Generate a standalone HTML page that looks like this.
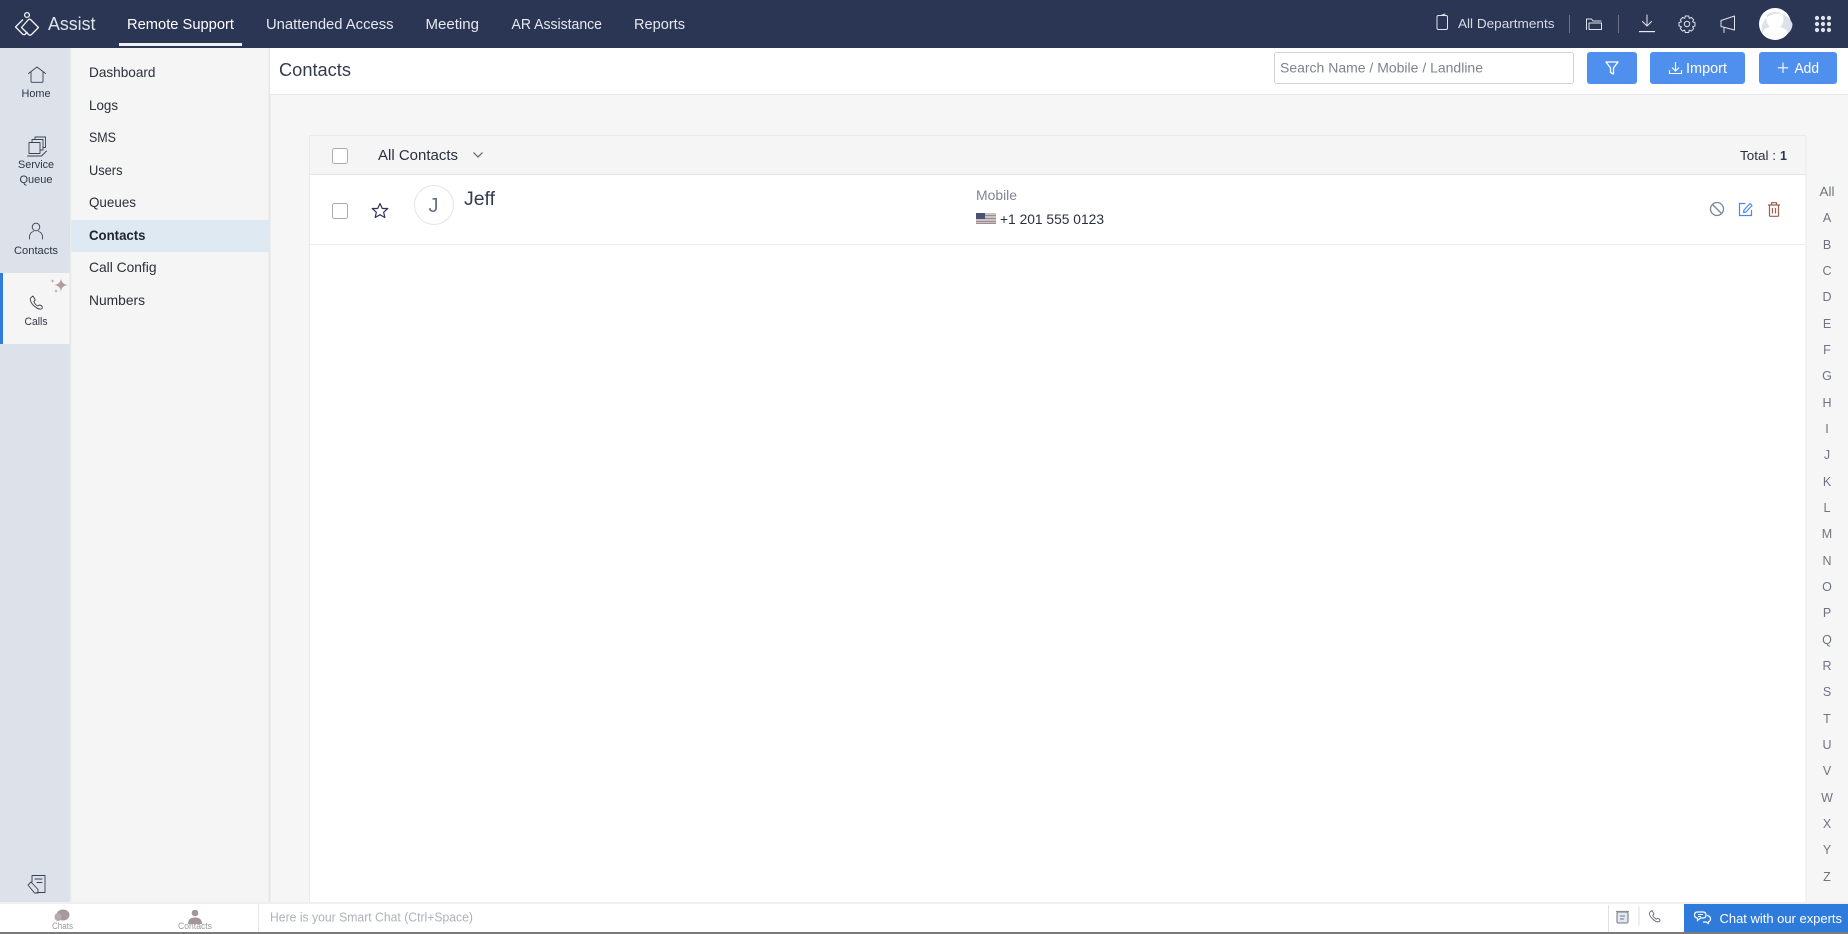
<!DOCTYPE html>
<html lang="en"><head><meta charset="utf-8"><title>Contacts</title>
<style>
html,body{margin:0;padding:0;width:1848px;height:934px;overflow:hidden;background:#fff}
svg{display:block}
text{font-family:"Liberation Sans",sans-serif}
.n{fill:#e6e9f0;font-size:14.5px}
.r{fill:#2f3645;font-size:11px;text-anchor:middle}
.m{fill:#2a2f3a;font-size:14px}
.a{fill:#6f7480;font-size:12.5px;text-anchor:middle}
.w{fill:none;stroke:#e0e4ec;stroke-width:1;stroke-linecap:round;stroke-linejoin:round}
.d{fill:none;stroke:#3a4150;stroke-width:.9;stroke-linecap:round;stroke-linejoin:round}
</style></head><body>
<svg xmlns="http://www.w3.org/2000/svg" width="1848" height="934" viewBox="0 0 1848 934">
<rect width="1848" height="934" fill="#f6f6f6"/>
<!-- header -->
<rect width="1848" height="48" fill="#2b3654"/>
<g fill="none" stroke="#f2f4f8" stroke-width="1.3" stroke-linejoin="round">
<circle cx="27" cy="15" r="2.400"/>
<path d="M23 19.500 L15.500 27 L22.500 34 Q24 35.300 25.500 34 L27.500 32"/>
<path d="M30.500 19.500 L38.500 27.500 L31.500 34.500 Q30 35.800 28.500 34.500 L21.500 27.500 L28 20 Q29.300 18.600 30.500 19.500Z"/>
</g>
<text x="48" y="30" font-size="18" fill="#dfe3ea" textLength="47.500" lengthAdjust="spacingAndGlyphs">Assist</text>
<text class="n" x="127" y="29" textLength="107" lengthAdjust="spacingAndGlyphs" style="fill:#fff">Remote Support</text>
<text class="n" x="266" y="29" textLength="127.500" lengthAdjust="spacingAndGlyphs">Unattended Access</text>
<text class="n" x="425.500" y="29" textLength="53.500" lengthAdjust="spacingAndGlyphs">Meeting</text>
<text class="n" x="511.500" y="29" textLength="90.500" lengthAdjust="spacingAndGlyphs">AR Assistance</text>
<text class="n" x="634" y="29" textLength="51" lengthAdjust="spacingAndGlyphs">Reports</text>
<rect x="119" y="43" width="123" height="3" fill="#eef0f4"/>
<rect x="1437" y="15.500" width="10.500" height="14" rx="1.500" class="w"/>
<path class="w" d="M1441 15.500l4-1.500"/>
<text x="1458" y="28" font-size="13" fill="#d5dae6" textLength="96.500" lengthAdjust="spacingAndGlyphs">All Departments</text>
<rect x="1569" y="15" width="1" height="18" fill="#6b748c"/>
<path class="w" d="M1586.500 29.500V19h5l1.500 2h8M1589 29.500h12.500V23h-12.500z" />
<rect x="1618" y="15" width="1" height="18" fill="#6b748c"/>
<path class="w" d="M1647 15v11M1642.500 21.500l4.500 4.500 4.500-4.500"/>
<rect x="1639" y="31" width="16" height="1.200" fill="#e8ebf0"/>
<g class="w"><circle cx="1687" cy="24" r="2.700"/>
<path d="M1685.300 16h3.400l.6 2.400 2-1 2.400 2.400-1.100 2 2.400.8v3.400l-2.400.7 1.100 2-2.400 2.400-2-1-.6 2.400h-3.400l-.6-2.400-2 1-2.400-2.400 1.100-2-2.400-.7v-3.400l2.400-.8-1.100-2 2.400-2.400 2 1z"/></g>
<path class="w" d="M1721 20.500l13.500-4.500v14l-13.500-3.500zM1724 27.500v5M1721 20.500v6"/>
<circle cx="1775" cy="24" r="16" fill="#fff"/>
<path d="M1762 33.500q1-5 8-6.500q-3.500-3-3.500-8q0-7 8.500-7t8.500 7q0 5-3.500 8q7 1.500 8 6.500q4.500-4 4.500-9.500a16 16 0 0 0-30 0q-3 1 0 0q-1 5 0 0q-1.500 5.500 0 9.500z" fill="#dde1e9"/>
<g fill="#dfe3ea"><circle cx="1817" cy="18" r="2.100"/><circle cx="1823" cy="18" r="2.100"/><circle cx="1829" cy="18" r="2.100"/><circle cx="1817" cy="24" r="2.100"/><circle cx="1823" cy="24" r="2.100"/><circle cx="1829" cy="24" r="2.100"/><circle cx="1817" cy="30" r="2.100"/><circle cx="1823" cy="30" r="2.100"/><circle cx="1829" cy="30" r="2.100"/></g>

<!-- rail -->
<rect y="48" width="70" height="856" fill="#dce1ea"/>
<rect x="70" y="48" width="200" height="856" fill="#f5f5f5"/>
<rect x="70" y="48" width="1.500" height="856" fill="#ebebeb"/>
<rect x="268.500" y="48" width="2" height="856" fill="#e6e6e6"/>
<path class="d" d="M28.500 73.500L37 67l8.500 6.500M31 72v9.500q0 .8.8.8h10.400q.8 0 .8-.8V72"/>
<text class="r" x="36" y="97" textLength="29" lengthAdjust="spacingAndGlyphs">Home</text>
<path class="d" d="M29 142.500h11v11H29zM32 142v-2.500h11V150h-3M35 139.500V137h10.500v10.500H43M27.500 156h14l5-5"/>
<text class="r" x="36" y="168" textLength="36" lengthAdjust="spacingAndGlyphs">Service</text>
<text class="r" x="36" y="183" textLength="33" lengthAdjust="spacingAndGlyphs">Queue</text>
<circle class="d" cx="36" cy="227" r="3.800"/>
<path class="d" d="M29.500 239v-2q0-4.500 4-5.500M42.500 239v-2q0-4.500-4-5.500"/>
<text class="r" x="36" y="254" textLength="44" lengthAdjust="spacingAndGlyphs">Contacts</text>
<rect y="273" width="69.500" height="71" fill="#f5f5f5"/>
<rect y="273" width="3" height="71" fill="#2f7be0"/>
<path class="d" d="M31 297.500l2-1.500 2.300 4-1.500 1.500q1 3 4 4.500l1.500-1q3 .5 3 2.500t-2.500 1.500q-2 0-3.500-1.500q-5-3-6-7.500q-.3-1.500.7-2.500z"/>
<text class="r" x="36" y="325" textLength="23" lengthAdjust="spacingAndGlyphs">Calls</text>
<path d="M61 278.500q.6 5.800 7 6.500q-6.400.7-7 6.500q-.6-5.800-7-6.500q6.400-.7 7-6.500z" fill="#b09c9e"/>
<path d="M52.500 279q.2 1.800 2 2q-1.800.2-2 2q-.2-1.800-2-2q1.800-.2 2-2zM56 289q.2 1.800 2 2q-1.800.2-2 2q-.2-1.800-2-2q1.800-.2 2-2z" fill="#b8a6a8"/>
<path class="d" d="M32 882v-6.500h13v17h-8M35 879h7M37 882.500h5M28 885l3-3 7 7.500v3.500h-3.500z" stroke-width="1.100"/>

<!-- menu -->
<rect x="71" y="220" width="198" height="32" fill="#dee9f1"/>
<text class="m" x="89" y="77" textLength="66.500" lengthAdjust="spacingAndGlyphs">Dashboard</text>
<text class="m" x="89" y="110" textLength="29" lengthAdjust="spacingAndGlyphs">Logs</text>
<text class="m" x="89" y="142" textLength="27" lengthAdjust="spacingAndGlyphs">SMS</text>
<text class="m" x="89" y="175" textLength="33.500" lengthAdjust="spacingAndGlyphs">Users</text>
<text class="m" x="89" y="207" textLength="47" lengthAdjust="spacingAndGlyphs">Queues</text>
<text class="m" x="89" y="240" font-weight="700" textLength="56.500" lengthAdjust="spacingAndGlyphs" style="fill:#1f2430">Contacts</text>
<text class="m" x="89" y="272" textLength="67.500" lengthAdjust="spacingAndGlyphs">Call Config</text>
<text class="m" x="89" y="305" textLength="56" lengthAdjust="spacingAndGlyphs">Numbers</text>

<!-- top bar -->
<rect x="270" y="48" width="1578" height="46" fill="#fff"/>
<rect x="270" y="94" width="1578" height="1" fill="#e9e9e9"/>
<text x="279" y="76" font-size="18" fill="#333c4d" textLength="72" lengthAdjust="spacingAndGlyphs">Contacts</text>
<rect x="1274.500" y="52.500" width="299" height="31" rx="2.500" fill="#fff" stroke="#cfd1d5"/>
<text x="1280" y="72.500" font-size="14" fill="#7e838c" textLength="203" lengthAdjust="spacingAndGlyphs">Search Name / Mobile / Landline</text>
<rect x="1587" y="52" width="50" height="32" rx="3" fill="#4f8fee"/>
<path d="M1606 62h12l-4.500 6v6l-3-1.500V68z" fill="none" stroke="#fff" stroke-width="1.300" stroke-linejoin="round"/>
<rect x="1650" y="52" width="95" height="32" rx="3" fill="#4f8fee"/>
<path d="M1675.500 62v9M1672 67.500l3.500 3.500 3.500-3.500M1669.500 70v3.500h12V70" fill="none" stroke="#fff" stroke-width="1.100"/>
<text x="1686" y="73" font-size="14.500" fill="#fff" textLength="41" lengthAdjust="spacingAndGlyphs">Import</text>
<rect x="1759" y="52" width="78" height="32" rx="3" fill="#4f8fee"/>
<path d="M1783 62.500v10.500M1777.800 67.800h10.400" stroke="#fff" stroke-width="1.100"/>
<text x="1794.500" y="73" font-size="14.500" fill="#fff" textLength="24.500" lengthAdjust="spacingAndGlyphs">Add</text>

<!-- panel -->
<rect x="309.500" y="135" width="1497" height="768" fill="#fff"/>
<rect x="310" y="135" width="1496" height="40" fill="#f5f5f5"/>
<path d="M309.500 903V135.500h1496.500V903" fill="none" stroke="#e9eaec"/>
<rect x="310" y="174" width="1496" height="1" fill="#e2e4ea"/>
<rect x="310" y="244" width="1496" height="1" fill="#eceef1"/>
<rect x="332.500" y="148.500" width="15" height="15" rx="2" fill="#fff" stroke="#a9abaf"/>
<text x="378" y="160" font-size="14.500" fill="#2b3040" textLength="80" lengthAdjust="spacingAndGlyphs">All Contacts</text>
<path d="M473.500 152.500l4.500 4.500 4.500-4.500" fill="none" stroke="#5a6270" stroke-width="1.200"/>
<text x="1740" y="160" font-size="12.500" fill="#2b3040" textLength="36" lengthAdjust="spacingAndGlyphs">Total :</text>
<text x="1780" y="160" font-size="12.500" font-weight="700" fill="#2b3654">1</text>
<rect x="332.500" y="203.500" width="15" height="15" rx="2" fill="#fff" stroke="#a9abaf"/>
<path d="M380 203.500l2.300 5h5.400l-4 3.700 1.100 5.300-4.800-2.800-4.800 2.800 1.100-5.300-4-3.700h5.400z" fill="none" stroke="#2b3654" stroke-width="1.200" stroke-linejoin="round"/>
<circle cx="434" cy="205" r="19.500" fill="#fff" stroke="#e4e4e6"/>
<text x="433.500" y="212" font-size="20" fill="#64728c" text-anchor="middle">J</text>
<text x="464" y="205" font-size="19" fill="#333c4d" textLength="31" lengthAdjust="spacingAndGlyphs">Jeff</text>
<text x="976" y="200" font-size="14" fill="#7f8590" textLength="41" lengthAdjust="spacingAndGlyphs">Mobile</text>
<rect x="976" y="213" width="20" height="11" fill="#c9c3c6"/>
<g fill="#a08a90"><rect x="976" y="215" width="20" height="1"/><rect x="976" y="218" width="20" height="1"/><rect x="976" y="221" width="20" height="1"/><rect x="976" y="223" width="20" height="1"/></g>
<rect x="976" y="213" width="9" height="6" fill="#4a5172"/>
<text x="1000" y="224" font-size="14" fill="#2b3040" textLength="104" lengthAdjust="spacingAndGlyphs">+1 201 555 0123</text>
<circle cx="1717" cy="209" r="6.500" fill="none" stroke="#7a8596" stroke-width="1.300"/>
<path d="M1712.500 204.500l9 9" stroke="#7a8596" stroke-width="1.300"/>
<path d="M1745.500 203.500h-6v12h12V210" fill="none" stroke="#4a88e8" stroke-width="1.200"/>
<path d="M1744 210l-.5 2.500 2.500-.5 6-6.500-2-2z" fill="none" stroke="#4a88e8" stroke-width="1.200" stroke-linejoin="round"/>
<path d="M1768 205h12M1771.500 205v-2.300h5v2.300M1769.500 205v10.500q0 .8.8.8h7.400q.8 0 .8-.8V205M1772.500 208v5.500M1775.500 208v5.500" fill="none" stroke="#9c5f50" stroke-width="1.200"/>

<!-- alphabet -->
<text class="a" x="1827" y="196" textLength="15" lengthAdjust="spacingAndGlyphs">All</text>
<text class="a" x="1827" y="222">A</text><text class="a" x="1827" y="249">B</text><text class="a" x="1827" y="275">C</text><text class="a" x="1827" y="301">D</text><text class="a" x="1827" y="328">E</text><text class="a" x="1827" y="354">F</text><text class="a" x="1827" y="380">G</text><text class="a" x="1827" y="407">H</text><text class="a" x="1827" y="433">I</text><text class="a" x="1827" y="459">J</text><text class="a" x="1827" y="486">K</text><text class="a" x="1827" y="512">L</text><text class="a" x="1827" y="538">M</text><text class="a" x="1827" y="565">N</text><text class="a" x="1827" y="591">O</text><text class="a" x="1827" y="617">P</text><text class="a" x="1827" y="644">Q</text><text class="a" x="1827" y="670">R</text><text class="a" x="1827" y="696">S</text><text class="a" x="1827" y="723">T</text><text class="a" x="1827" y="749">U</text><text class="a" x="1827" y="775">V</text><text class="a" x="1827" y="802">W</text><text class="a" x="1827" y="828">X</text><text class="a" x="1827" y="854">Y</text><text class="a" x="1827" y="881">Z</text>

<!-- bottom bar -->
<rect y="902" width="1848" height="2" fill="#efefef"/>
<rect y="904" width="1848" height="28" fill="#fff"/>
<rect y="932" width="1848" height="2" fill="#7a7a7a"/>
<rect x="258" y="904" width="1" height="28" fill="#e6e6e6"/>
<ellipse cx="63" cy="915" rx="6.500" ry="5.500" fill="#a8989a"/>
<ellipse cx="58" cy="917" rx="3.500" ry="4" fill="#b8abad"/>
<text x="52" y="929" font-size="9" fill="#9a9a9f" textLength="21" lengthAdjust="spacingAndGlyphs">Chats</text>
<circle cx="195" cy="913" r="3.300" fill="#a3959a"/>
<path d="M188 924q0-6.500 7-6.500t7 6.500z" fill="#a3959a"/>
<text x="178" y="929" font-size="9" fill="#9a9a9f" textLength="34" lengthAdjust="spacingAndGlyphs">Contacts</text>
<text x="270" y="921.500" font-size="13" fill="#aeb2b9" textLength="203" lengthAdjust="spacingAndGlyphs">Here is your Smart Chat (Ctrl+Space)</text>
<rect x="1608" y="905" width="1" height="27" fill="#e0e0e0"/>
<rect x="1617" y="912" width="11" height="11" rx="1.500" fill="#dfe7f2" stroke="#8d8f96" stroke-width="1.300"/>
<path d="M1616 911.500h13M1620 916h5M1620 919h4" stroke="#8d8f96" stroke-width="1.300" fill="none"/>
<rect x="1638.500" y="906" width="1" height="20" fill="#dedede"/>
<path d="M1650 912l2-1.500 2 3.500-1.200 1.200q1 2.500 3.500 4l1.200-.8q2.500.5 2.500 2t-2.200 1.500q-1.500 0-3-1.200q-4-2.500-5.300-6.200q-.4-1.300.5-2.500z" fill="none" stroke="#6e7480" stroke-width="1"/>
<rect x="1684" y="904" width="164" height="28" fill="#2f7bdb"/>
<path d="M1701 912h-3.500q-3 0-3 3t3 3v2.500l3-2.500h2.500q3 0 3-3t-3-3z" fill="none" stroke="#fff" stroke-width="1.200"/>
<path d="M1707 915.500q3.500.5 3.500 3.500 0 2-2 2.800v1.700l-2.500-1.500h-3" fill="none" stroke="#fff" stroke-width="1.200"/>
<path d="M1698 914.500h5M1698 916.500h3" stroke="#fff" stroke-width="1"/>
<text x="1719.500" y="923" font-size="13" fill="#fff" textLength="122.500" lengthAdjust="spacingAndGlyphs">Chat with our experts</text>
</svg>
</body></html>
